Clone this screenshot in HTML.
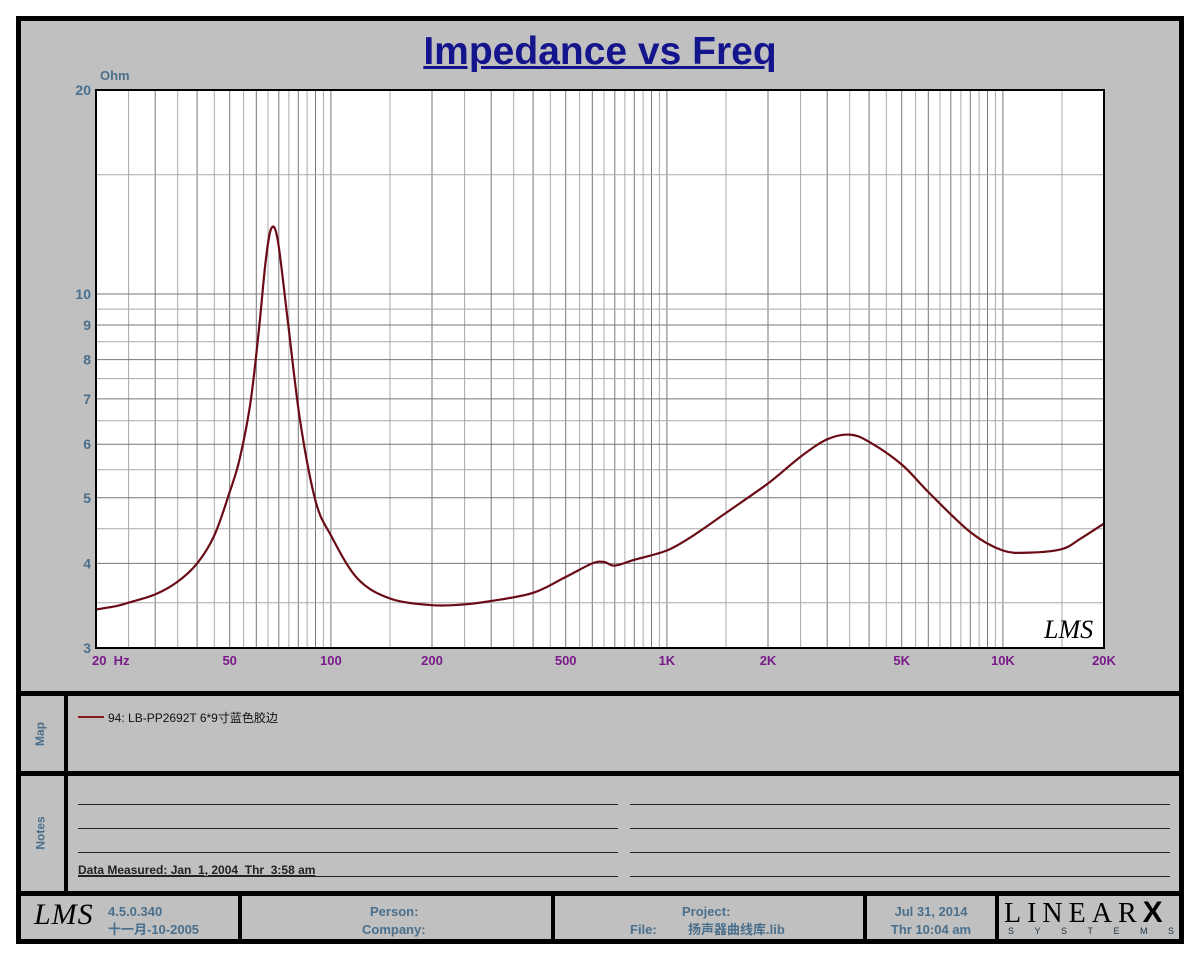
<!DOCTYPE html>
<html><head><meta charset="utf-8"><style>
body{margin:0;width:1200px;height:960px;background:#fff;position:relative;overflow:hidden;font-family:"Liberation Sans","Noto Sans CJK SC",sans-serif}
.a{position:absolute}
.k{position:absolute;background:#000}
.lbl{color:#4a6f8c;font-weight:bold;font-size:13px}
.vl{position:absolute;transform:rotate(-90deg);color:#4a6f8c;font-weight:bold;font-size:12px}
.nl{position:absolute;height:1px;background:#222}
</style></head><body>
<div class="a" style="left:16px;top:16px;width:1158px;height:918px;border:5px solid #000;background:#c0c0c0"></div>
<div class="a" style="left:0;top:30px;width:1200px;text-align:center;font-size:39px;font-weight:bold;color:#14148c;text-decoration:underline">Impedance vs Freq</div>
<div class="a lbl" style="left:100px;top:68px">Ohm</div>
<svg class="a" style="left:0;top:0" width="1200" height="690" id="ch"></svg>
<div class="k" style="left:16px;top:691px;width:1168px;height:5px"></div>
<div class="k" style="left:16px;top:771px;width:1168px;height:5px"></div>
<div class="k" style="left:16px;top:891px;width:1168px;height:5px"></div>
<div class="k" style="left:64px;top:694px;width:4px;height:200px"></div>
<div class="vl" style="left:28px;top:727px">Map</div>
<div class="vl" style="left:24px;top:826px">Notes</div>
<div class="a" style="left:78px;top:716px;width:26px;height:2px;background:#8a1a1a"></div>
<div class="a" style="left:108px;top:709px;font-size:12px;color:#111">94: LB-PP2692T 6*9寸蓝色胶边</div>
<div class="nl" style="left:78px;top:804px;width:540px"></div>
<div class="nl" style="left:78px;top:828px;width:540px"></div>
<div class="nl" style="left:78px;top:852px;width:540px"></div>
<div class="nl" style="left:78px;top:876px;width:540px"></div>
<div class="nl" style="left:630px;top:804px;width:540px"></div>
<div class="nl" style="left:630px;top:828px;width:540px"></div>
<div class="nl" style="left:630px;top:852px;width:540px"></div>
<div class="nl" style="left:630px;top:876px;width:540px"></div>
<div class="a" style="left:78px;top:863px;font-size:12px;font-weight:bold;color:#222;text-decoration:underline">Data Measured: Jan&nbsp; 1, 2004&nbsp; Thr&nbsp; 3:58 am</div>
<div class="k" style="left:238px;top:894px;width:4px;height:46px"></div>
<div class="k" style="left:551px;top:894px;width:4px;height:46px"></div>
<div class="k" style="left:863px;top:894px;width:4px;height:46px"></div>
<div class="k" style="left:995px;top:894px;width:4px;height:46px"></div>
<div class="a" style="left:34px;top:898px;font-size:30px;font-style:italic;font-family:'Liberation Serif',serif;color:#000;letter-spacing:1px">LMS</div>
<div class="a lbl" style="left:108px;top:903px;line-height:18px">4.5.0.340<br>十一月-10-2005</div>
<div class="a lbl" style="left:242px;top:903px;width:309px;line-height:18px"><span class="a" style="left:128px">Person:</span><span class="a" style="left:120px;top:18px">Company:</span></div>
<div class="a lbl" style="left:555px;top:903px;width:308px;line-height:18px"><span class="a" style="left:127px">Project:</span><span class="a" style="left:75px;top:18px">File:</span><span class="a" style="left:133px;top:18px">扬声器曲线库.lib</span></div>
<div class="a lbl" style="left:867px;top:903px;width:128px;text-align:center;line-height:18px">Jul 31, 2014<br>Thr 10:04 am</div>
<div class="a" style="left:1004px;top:896px;font-family:'Liberation Serif',serif;font-size:28px;letter-spacing:6px;color:#000">LINEAR<b style="font-family:'Liberation Sans';font-size:30px">X</b></div>
<div class="a" style="left:1008px;top:926px;font-size:9px;letter-spacing:20.5px;color:#234">SYSTEMS</div>
<script>
var s=document.getElementById('ch'),h='';
function fx(f){return 96+(Math.log10(f/20))*336}
function fy(o){return 648-Math.log10(o/3)*677}
h+='<rect x="96" y="90" width="1008" height="558" fill="#fff"/>';
var vs=[];
for(var k=1;k<=4;k++){for(var d=1;d<10;d+=0.5){var f=d*Math.pow(10,k);if(f>20&&f<20000)vs.push([f,d%1==0])}}
vs.forEach(function(v){var x=fx(v[0]).toFixed(1);h+='<line x1="'+x+'" x2="'+x+'" y1="90" y2="648" stroke="'+(v[1]?'#777':'#aaa')+'" stroke-width="1"/>'});
for(var o=3.5;o<10;o+=0.5){var y=fy(o).toFixed(1);h+='<line x1="96" x2="1104" y1="'+y+'" y2="'+y+'" stroke="'+(o%1==0?'#777':'#aaa')+'"/>'}
[10,15].forEach(function(o){var y=fy(o).toFixed(1);h+='<line x1="96" x2="1104" y1="'+y+'" y2="'+y+'" stroke="'+(o==10?'#777':'#aaa')+'"/>'});
var P=[[20,3.42],[23,3.46],[25,3.5],[30,3.6],[35,3.76],[40,4.0],[45,4.4],[50,5.1],[53.5,5.7],[57.6,6.9],[61,8.8],[64,11.2],[66.5,12.5],[69.5,12.0],[74.5,9.1],[81,6.5],[90,4.95],[100,4.4],[120,3.8],[150,3.55],[200,3.47],[250,3.48],[300,3.52],[400,3.62],[500,3.82],[600,4.0],[650,4.02],[700,3.97],[800,4.05],[1000,4.18],[1200,4.4],[1500,4.75],[2000,5.25],[2500,5.75],[3000,6.1],[3500,6.2],[4000,6.05],[5000,5.6],[6000,5.1],[8000,4.45],[10000,4.18],[12000,4.15],[15000,4.2],[17000,4.35],[20000,4.58]];
var Q=P.map(function(p){return [fx(p[0]),fy(p[1])]});
var d='M'+Q[0][0].toFixed(1)+' '+Q[0][1].toFixed(1);
for(var i=0;i<Q.length-1;i++){var p0=Q[Math.max(0,i-1)],p1=Q[i],p2=Q[i+1],p3=Q[Math.min(Q.length-1,i+2)];
var c1x=p1[0]+(p2[0]-p0[0])/6,c1y=p1[1]+(p2[1]-p0[1])/6,c2x=p2[0]-(p3[0]-p1[0])/6,c2y=p2[1]-(p3[1]-p1[1])/6;
d+=' C'+c1x.toFixed(1)+' '+c1y.toFixed(1)+' '+c2x.toFixed(1)+' '+c2y.toFixed(1)+' '+p2[0].toFixed(1)+' '+p2[1].toFixed(1)}
h+='<path d="'+d+'" fill="none" stroke="#6a0c16" stroke-width="2.2" stroke-linejoin="round"/>';
h+='<rect x="96" y="90" width="1008" height="558" fill="none" stroke="#000" stroke-width="2"/>';
[[3,'3'],[4,'4'],[5,'5'],[6,'6'],[7,'7'],[8,'8'],[9,'9'],[10,'10'],[20,'20']].forEach(function(l){h+='<text x="91" y="'+(fy(l[0])+5).toFixed(1)+'" text-anchor="end" font-family="Liberation Sans" font-weight="bold" font-size="14" fill="#4a6f8c">'+l[1]+'</text>'});
[[50,'50'],[100,'100'],[200,'200'],[500,'500'],[1000,'1K'],[2000,'2K'],[5000,'5K'],[10000,'10K'],[20000,'20K']].forEach(function(l){h+='<text x="'+fx(l[0]).toFixed(1)+'" y="665" text-anchor="middle" font-family="Liberation Sans" font-weight="bold" font-size="13" fill="#7a1a8a">'+l[1]+'</text>'});
h+='<text x="92" y="665" font-family="Liberation Sans" font-weight="bold" font-size="13" fill="#7a1a8a">20&#160; Hz</text>';
h+='<text x="1044" y="638" font-family="Liberation Serif" font-style="italic" font-size="26" fill="#000">LMS</text>';
s.innerHTML=h;
</script>
</body></html>
